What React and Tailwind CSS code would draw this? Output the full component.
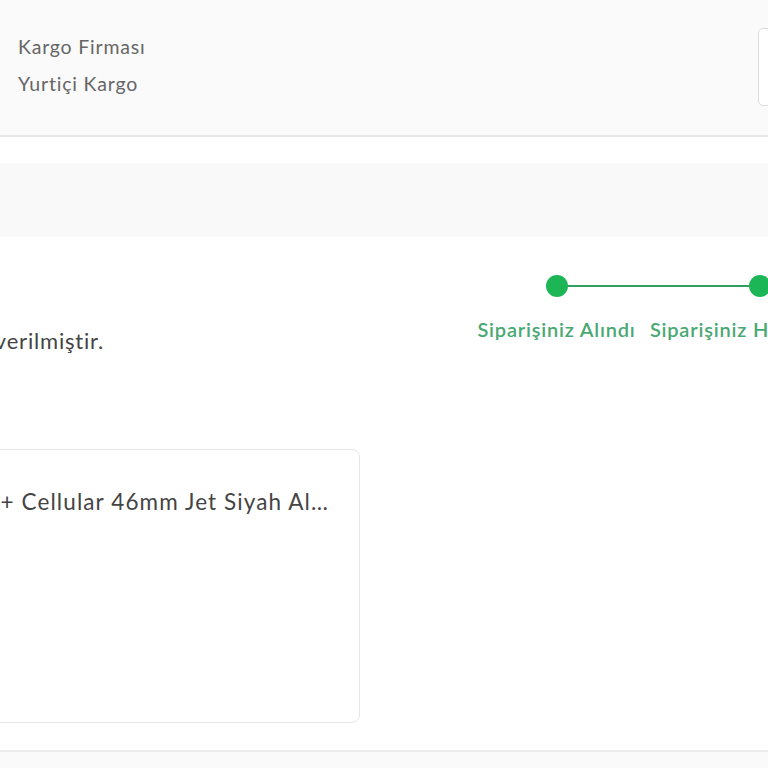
import React from "react";

export default function App() {
  return (
    <div className="w-[768px] h-[768px] overflow-hidden bg-white text-[#444] flex flex-col" style={{ fontFamily: "Lato, 'Noto Sans', sans-serif" }}>
      {/* Top cargo panel */}
      <div className="h-[137px] shrink-0 bg-[#fafafa] border-b-2 border-[#e6e6e6] flex items-start pl-[18px]">
        <div className="flex flex-col pt-[34px] gap-[12px] text-[19.5px] leading-[25px] tracking-[0.8px] text-[#666]">
          <span>Kargo Firması</span>
          <span>Yurtiçi Kargo</span>
        </div>
        <div className="ml-auto mt-[28px] mr-[-60px] w-[70px] h-[78px] bg-white border border-[#dcdcdc] rounded-[5px]" />
      </div>

      {/* spacer */}
      <div className="h-[26px] shrink-0" />

      {/* gray band */}
      <div className="h-[74px] shrink-0 bg-[#f9f9f9]" />

      {/* status section */}
      <div className="flex shrink-0 h-[212px]">
        <div className="w-[104px] shrink-0 overflow-hidden flex justify-end items-start pt-[89px]">
          <span className="whitespace-nowrap text-[22px] leading-[30px] tracking-[0.8px] text-[#444]">Kargoya verilmiştir.</span>
        </div>
        <div className="flex-1 flex flex-col pt-[38px] overflow-hidden">
          <div className="flex items-center ml-[442px]">
            <span className="w-[22px] h-[22px] rounded-full bg-[#1db656] shrink-0" />
            <span className="w-[181px] h-[2px] bg-[#2f9e5e] shrink-0" />
            <span className="w-[22px] h-[22px] rounded-full bg-[#1db656] shrink-0" />
            <span className="w-[181px] h-[2px] bg-[#2f9e5e] shrink-0" />
          </div>
          <div className="flex ml-[351px] mt-[20px]">
            <span className="w-[203px] shrink-0 flex justify-center whitespace-nowrap text-[20px] leading-[24px] font-semibold tracking-[0.8px] text-[#4aa873]">Siparişiniz Alındı</span>
            <span className="w-[203px] shrink-0 flex justify-center whitespace-nowrap text-[20px] leading-[24px] font-semibold tracking-[0.8px] text-[#4aa873]">Siparişiniz Hazırlanıyor</span>
          </div>
        </div>
      </div>

      {/* product card row */}
      <div className="flex shrink-0 h-[303px] border-b-2 border-[#ececec]">
        <div className="w-[400px] h-[274px] -ml-[40px] pl-[40px] mr-auto border border-[#e6e6e6] rounded-[8px] bg-white overflow-hidden flex items-start pt-[37px]">
          <div className="w-[328px] shrink-0 overflow-hidden flex justify-end">
            <span className="whitespace-nowrap text-[22.5px] leading-[30px] tracking-[1.1px] text-[#444]">Apple Watch Series 10 GPS + Cellular 46mm Jet Siyah Al…</span>
          </div>
        </div>
      </div>

      <div className="flex-1 bg-[#fafafa]" />
    </div>
  );
}
